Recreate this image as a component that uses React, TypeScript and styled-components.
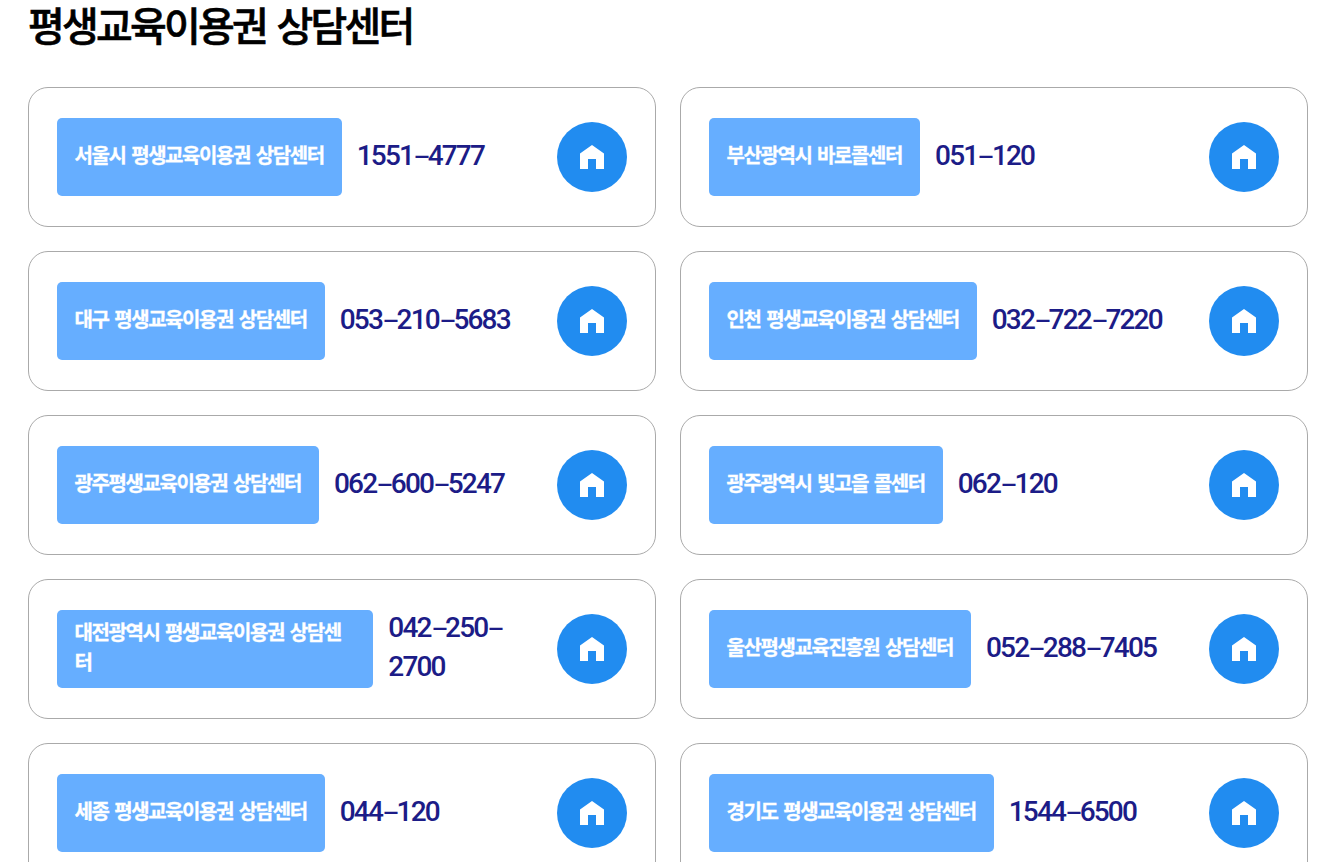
import { Fragment } from 'react';
import styled, { createGlobalStyle } from 'styled-components';

const GlobalStyle = createGlobalStyle`
  * {
    box-sizing: border-box;
  }
  body {
    margin: 0;
    background-color: #fff;
    font-family: "Noto Sans CJK KR", "Noto Sans", sans-serif;
    overflow: hidden;
  }
`;

const PageWrapper = styled.main`
  width: 100%;
  height: 862px;
  overflow: hidden;
  padding: 0 15px 0 28px;
`;

const Title = styled.h1`
  margin: 0 0 38px;
  height: 49px;
  font-size: 40px;
  font-weight: 500;
  line-height: 49px;
  letter-spacing: -2.8px;
  word-spacing: 4.4px;
  color: #000;
  -webkit-text-stroke: 0.6px #000;
`;

const CenterList = styled.ul`
  display: grid;
  grid-template-columns: 1fr 1fr;
  gap: 24px;
  margin: 0;
  padding: 0;
  list-style: none;
`;

const CenterCard = styled.li`
  display: flex;
  align-items: center;
  height: 140px;
  padding: 0 28px;
  border: 1px solid #aaa;
  border-radius: 20px;
`;

const Info = styled.div`
  display: flex;
  align-items: center;
  flex: 1;
  min-width: 0;
`;

const Label = styled.p`
  display: flex;
  align-items: center;
  height: 78px;
  margin: 0 15px 0 0;
  padding: 0 18px 4px 17.5px;
  border-radius: 5px;
  background-color: #66aeff;
  color: #fff;
  font-size: 20px;
  font-weight: 700;
  line-height: 30px;
  letter-spacing: -1.42px;
  word-spacing: 2.6px;
  word-break: break-all;
  -webkit-text-stroke: 0.3px #fff;
`;

const Phone = styled.p`
  margin: 0;
  padding-bottom: 4px;
  color: #1c1c87;
  font-family: Roboto, "Noto Sans CJK KR", sans-serif;
  font-size: 28px;
  font-weight: 500;
  line-height: 39px;
  letter-spacing: -1.8px;
`;

const PhonePart = styled.span`
  white-space: nowrap;
`;

const Dash = styled.span`
  display: inline-block;
  width: 14.5px;
  transform: translate(0.5px, -0.5px) scale(1.8, 0.85);
  transform-origin: 0 60%;
`;

const HomeLink = styled.a`
  display: flex;
  justify-content: center;
  align-items: center;
  flex-shrink: 0;
  width: 70px;
  height: 70px;
  border-radius: 50%;
  background-color: #218cf0;
`;

const centers = [
  { name: '서울시 평생교육이용권 상담센터', phone: '1551-4777' },
  { name: '부산광역시 바로콜센터', phone: '051-120' },
  { name: '대구 평생교육이용권 상담센터', phone: '053-210-5683' },
  { name: '인천 평생교육이용권 상담센터', phone: '032-722-7220' },
  { name: '광주평생교육이용권 상담센터', phone: '062-600-5247' },
  { name: '광주광역시 빛고을 콜센터', phone: '062-120' },
  { name: '대전광역시 평생교육이용권 상담센터', phone: '042-250-2700' },
  { name: '울산평생교육진흥원 상담센터', phone: '052-288-7405' },
  { name: '세종 평생교육이용권 상담센터', phone: '044-120' },
  { name: '경기도 평생교육이용권 상담센터', phone: '1544-6500' },
];

function HomeIcon() {
  return (
    <svg width="24" height="24" viewBox="0 0 24 24" fill="#fff">
      <path d="M12 0L24 8.5V24H16V14H8V24H0V8.5Z" />
    </svg>
  );
}

function PhoneNumber({ value }: { value: string }) {
  const parts = value.split('-');

  // a long number may only wrap after a dash
  return (
    <Phone>
      {parts.map((part, i) => (
        <Fragment key={i}>
          <PhonePart>
            {part}
            {i < parts.length - 1 && <Dash>-</Dash>}
          </PhonePart>
          <wbr />
        </Fragment>
      ))}
    </Phone>
  );
}

export default function App() {
  return (
    <PageWrapper>
      <GlobalStyle />
      <Title>평생교육이용권 상담센터</Title>
      <CenterList>
        {centers.map((center) => (
          <CenterCard key={center.name}>
            <Info>
              <Label>{center.name}</Label>
              <PhoneNumber value={center.phone} />
            </Info>
            <HomeLink href="#" aria-label={center.name}>
              <HomeIcon />
            </HomeLink>
          </CenterCard>
        ))}
      </CenterList>
    </PageWrapper>
  );
}
